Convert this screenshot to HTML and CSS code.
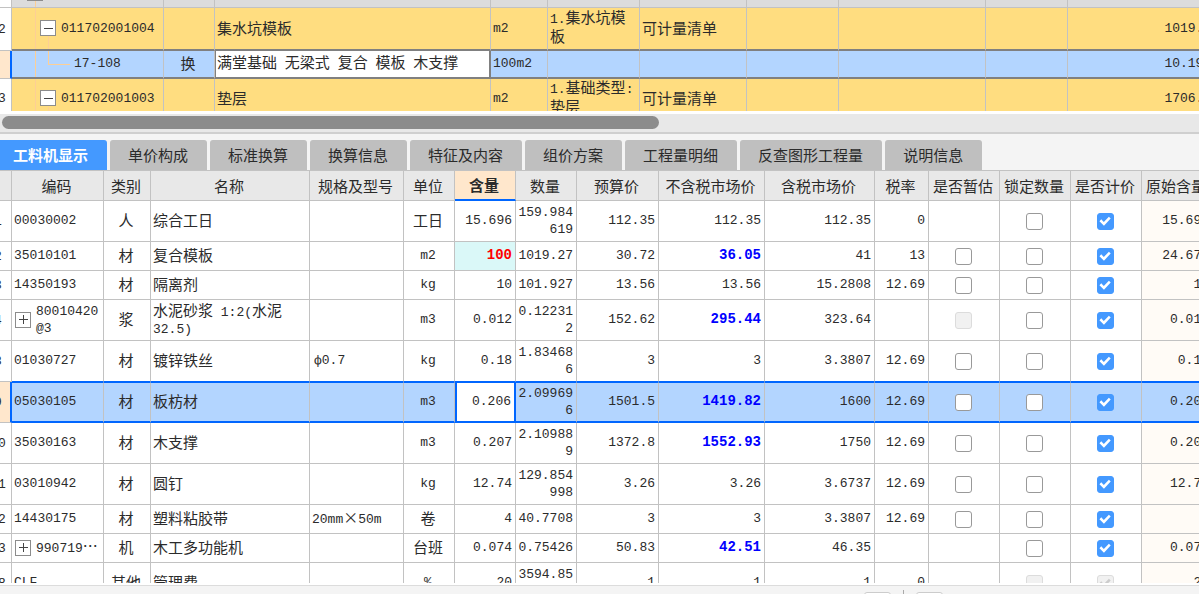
FILE: index.html
```html
<!DOCTYPE html>
<html lang="zh-CN">
<head>
<meta charset="utf-8">
<title>工料机显示</title>
<link rel="stylesheet" href="styles.css">
</head>
<body>
<main class="app">
<section class="bill-pane">
<table class="grid bill">
<colgroup><col class="w12"><col class="w152"><col class="w51"><col><col class="w57"><col class="w92"><col class="w107"><col class="w92"><col class="w147"><col class="w82"><col class="w155"></colgroup>
<tbody>
<tr class="group"><td class="head"></td><td class="tree root"></td><td></td><td></td><td></td><td></td><td></td><td></td><td></td><td></td><td></td></tr>
<tr class="item first"><td class="head"><span class="no">12</span></td><td class="tree"><div class="code"><button class="toggle" aria-label="折叠"></button>011702001004</div></td><td></td><td class="zh">集水坑模板</td><td>m2</td><td>1.<span class="zh">集水坑模板</span></td><td class="zh">可计量清单</td><td></td><td></td><td></td><td class="num">1019.27</td></tr>
<tr class="current"><td class="head"></td><td class="tree leaf">17-108</td><td class="zh mid">换</td><td class="edit"><span class="zh">满堂基础</span> <span class="zh">无梁式</span> <span class="zh">复合</span> <span class="zh">模板</span> <span class="zh">木支撑</span></td><td>100m2</td><td></td><td></td><td></td><td></td><td></td><td class="num">10.1927</td></tr>
<tr class="item last"><td class="head"><span class="no">13</span></td><td class="tree"><div class="code"><button class="toggle" aria-label="折叠"></button>011702001003</div></td><td></td><td class="zh">垫层</td><td>m2</td><td>1.<span class="zh">基础类型</span>:<span class="zh">垫层</span></td><td class="zh">可计量清单</td><td></td><td></td><td></td><td class="num">1706.49</td></tr>
</tbody>
</table>
</section>
<div class="scroll"><div class="thumb"></div></div>
<nav class="tabs" role="tablist">
<button class="tab on" role="tab" aria-selected="true">工料机显示</button>
<button class="tab" role="tab">单价构成</button>
<button class="tab" role="tab">标准换算</button>
<button class="tab" role="tab">换算信息</button>
<button class="tab" role="tab">特征及内容</button>
<button class="tab" role="tab">组价方案</button>
<button class="tab" role="tab">工程量明细</button>
<button class="tab" role="tab">反查图形工程量</button>
<button class="tab" role="tab">说明信息</button>
</nav>
<section class="detail-pane">
<table class="grid detail">
<colgroup><col class="w12"><col class="w92"><col class="w47"><col><col class="w94"><col class="w51"><col class="w61"><col class="w61"><col class="w82"><col class="w106"><col class="w110"><col class="w54"><col class="w71"><col class="w71"><col class="w71"><col class="w71"></colgroup>
<thead>
<tr><th></th><th>编码</th><th>类别</th><th>名称</th><th>规格及型号</th><th>单位</th><th class="active">含量</th><th>数量</th><th>预算价</th><th>不含税市场价</th><th>含税市场价</th><th>税率</th><th>是否暂估</th><th>锁定数量</th><th>是否计价</th><th>原始含量</th></tr>
</thead>
<tbody>
<tr class="tall"><td class="head"><span class="no">1</span></td><td>00030002</td><td class="zh mid">人</td><td class="zh">综合工日</td><td></td><td class="zh mid">工日</td><td class="num">15.696</td><td class="num">159.984619</td><td class="num">112.35</td><td class="num">112.35</td><td class="num">112.35</td><td class="num">0</td><td></td><td class="mid"><input type="checkbox" aria-label="锁定数量"></td><td class="mid"><input type="checkbox" aria-label="是否计价" checked></td><td class="num orig">15.696</td></tr>
<tr><td class="head"><span class="no">2</span></td><td>35010101</td><td class="zh mid">材</td><td class="zh">复合模板</td><td></td><td class="mid">m2</td><td class="num changed">100</td><td class="num">1019.27</td><td class="num">30.72</td><td class="num price">36.05</td><td class="num">41</td><td class="num">13</td><td class="mid"><input type="checkbox" aria-label="是否暂估"></td><td class="mid"><input type="checkbox" aria-label="锁定数量"></td><td class="mid"><input type="checkbox" aria-label="是否计价" checked></td><td class="num orig">24.675</td></tr>
<tr><td class="head"><span class="no">3</span></td><td>14350193</td><td class="zh mid">材</td><td class="zh">隔离剂</td><td></td><td class="mid">kg</td><td class="num">10</td><td class="num">101.927</td><td class="num">13.56</td><td class="num">13.56</td><td class="num">15.2808</td><td class="num">12.69</td><td class="mid"><input type="checkbox" aria-label="是否暂估"></td><td class="mid"><input type="checkbox" aria-label="锁定数量"></td><td class="mid"><input type="checkbox" aria-label="是否计价" checked></td><td class="num orig">10</td></tr>
<tr class="tall"><td class="head"><span class="no">4</span></td><td><div class="code"><button class="toggle plus" aria-label="展开"></button><span>80010420@3</span></div></td><td class="zh mid">浆</td><td class="mix"><span class="zh">水泥砂浆</span> 1:2(<span class="zh">水泥</span> <span class="keep">32.5)</span></td><td></td><td class="mid">m3</td><td class="num">0.012</td><td class="num">0.122312</td><td class="num">152.62</td><td class="num price">295.44</td><td class="num">323.64</td><td></td><td class="mid"><input type="checkbox" aria-label="是否暂估" disabled></td><td class="mid"><input type="checkbox" aria-label="锁定数量"></td><td class="mid"><input type="checkbox" aria-label="是否计价" checked></td><td class="num orig">0.012</td></tr>
<tr class="tall before"><td class="head"><span class="no">8</span></td><td>01030727</td><td class="zh mid">材</td><td class="zh">镀锌铁丝</td><td class="spec">ф0.7</td><td class="mid">kg</td><td class="num">0.18</td><td class="num">1.834686</td><td class="num">3</td><td class="num">3</td><td class="num">3.3807</td><td class="num">12.69</td><td class="mid"><input type="checkbox" aria-label="是否暂估"></td><td class="mid"><input type="checkbox" aria-label="锁定数量"></td><td class="mid"><input type="checkbox" aria-label="是否计价" checked></td><td class="num orig">0.18</td></tr>
<tr class="tall selected"><td class="head"><span class="no">9</span></td><td>05030105</td><td class="zh mid">材</td><td class="zh">板枋材</td><td></td><td class="mid">m3</td><td class="num focus">0.206</td><td class="num">2.099696</td><td class="num">1501.5</td><td class="num price">1419.82</td><td class="num">1600</td><td class="num">12.69</td><td class="mid"><input type="checkbox" aria-label="是否暂估"></td><td class="mid"><input type="checkbox" aria-label="锁定数量"></td><td class="mid"><input type="checkbox" aria-label="是否计价" checked></td><td class="num orig">0.206</td></tr>
<tr class="tall"><td class="head"><span class="no">10</span></td><td>35030163</td><td class="zh mid">材</td><td class="zh">木支撑</td><td></td><td class="mid">m3</td><td class="num">0.207</td><td class="num">2.109889</td><td class="num">1372.8</td><td class="num price">1552.93</td><td class="num">1750</td><td class="num">12.69</td><td class="mid"><input type="checkbox" aria-label="是否暂估"></td><td class="mid"><input type="checkbox" aria-label="锁定数量"></td><td class="mid"><input type="checkbox" aria-label="是否计价" checked></td><td class="num orig">0.207</td></tr>
<tr class="tall"><td class="head"><span class="no">11</span></td><td>03010942</td><td class="zh mid">材</td><td class="zh">圆钉</td><td></td><td class="mid">kg</td><td class="num">12.74</td><td class="num">129.854998</td><td class="num">3.26</td><td class="num">3.26</td><td class="num">3.6737</td><td class="num">12.69</td><td class="mid"><input type="checkbox" aria-label="是否暂估"></td><td class="mid"><input type="checkbox" aria-label="锁定数量"></td><td class="mid"><input type="checkbox" aria-label="是否计价" checked></td><td class="num orig">12.74</td></tr>
<tr><td class="head"><span class="no">12</span></td><td>14430175</td><td class="zh mid">材</td><td class="zh">塑料粘胶带</td><td>20mm<span class="zh">×</span>50m</td><td class="zh mid">卷</td><td class="num">4</td><td class="num">40.7708</td><td class="num">3</td><td class="num">3</td><td class="num">3.3807</td><td class="num">12.69</td><td class="mid"><input type="checkbox" aria-label="是否暂估"></td><td class="mid"><input type="checkbox" aria-label="锁定数量"></td><td class="mid"><input type="checkbox" aria-label="是否计价" checked></td><td class="num orig">4</td></tr>
<tr><td class="head"><span class="no">13</span></td><td><div class="code"><button class="toggle plus" aria-label="展开"></button><span>990719<span class="zh">…</span></span></div></td><td class="zh mid">机</td><td class="zh">木工多功能机</td><td></td><td class="zh mid">台班</td><td class="num">0.074</td><td class="num">0.75426</td><td class="num">50.83</td><td class="num price">42.51</td><td class="num">46.35</td><td></td><td></td><td class="mid"><input type="checkbox" aria-label="锁定数量"></td><td class="mid"><input type="checkbox" aria-label="是否计价" checked></td><td class="num orig">0.074</td></tr>
<tr class="tall"><td class="head"><span class="no">18</span></td><td>CLF</td><td class="zh mid">其他</td><td class="zh">管理费</td><td></td><td class="mid">%</td><td class="num">20</td><td class="num">3594.8541</td><td class="num">1</td><td class="num">1</td><td class="num">1</td><td class="num">0</td><td></td><td class="mid"><input type="checkbox" aria-label="锁定数量" disabled></td><td class="mid"><input type="checkbox" aria-label="是否计价" checked disabled></td><td class="num orig">20</td></tr>
</tbody>
</table>
</section>
<footer class="status"><span class="chip"></span><span class="divider"></span><span class="chip"></span></footer>
</main>
</body>
</html>
```
FILE: styles.css
```css
* { box-sizing: border-box; }

body {
  margin: 0;
  color: #2b2b2b;
  background: #f4f4f4;
  font: 13px/17px "Liberation Mono", "Noto Sans CJK SC", monospace;
}

button { font: inherit; color: inherit; }

.app {
  display: grid;
  grid-template-rows: 114px 20px 37px minmax(0, 1fr) 9px;
  height: 100vh;
  overflow: hidden;
}

.app > * { min-width: 0; overflow: hidden; }

.zh, th, .tab { font-family: "Noto Sans CJK SC", sans-serif; font-size: 15px; }
span.zh { line-height: 16px; }

/* Shared grid */
.grid {
  width: 100%;
  table-layout: fixed;
  border-collapse: separate;
  border-spacing: 0;
}

.grid td, .grid th {
  padding: 0 2px 1px;
  border-right: 1px solid #c2c2c2;
  border-bottom: 1px solid #c2c2c2;
  word-break: break-all;
}

.grid td.zh { padding-bottom: 3px; }
.grid .head { padding: 0; background: #fff; }
.no { display: block; width: 16px; margin-left: -10px; text-align: center; }
.grid .mid { padding-left: 0; text-align: center; }
.grid .num { text-align: right; padding-right: 3px; }
.code { display: flex; align-items: center; gap: 5px; }

.toggle {
  flex: none;
  width: 16px;
  height: 16px;
  padding: 0;
  border: 1px solid #8c8c8c;
  background: linear-gradient(#444, #444) center / 9px 1px no-repeat #fff;
}

.toggle.plus {
  margin-left: 1px;
  background: linear-gradient(#444, #444) center / 9px 1px no-repeat,
    linear-gradient(#444, #444) center / 1px 9px no-repeat #fff;
}

.w12 { width: 12px; }
.w47 { width: 47px; }
.w51 { width: 51px; }
.w54 { width: 54px; }
.w57 { width: 57px; }
.w61 { width: 61px; }
.w71 { width: 71px; }
.w82 { width: 82px; }
.w92 { width: 92px; }
.w94 { width: 94px; }
.w106 { width: 106px; }
.w107 { width: 107px; }
.w110 { width: 110px; }
.w147 { width: 147px; }
.w152 { width: 152px; }
.w155 { width: 155px; }

/* Bill list */
.bill-pane { border-bottom: 3px solid #fff; background: #fff; }
.bill { min-width: 1223px; }
.group { height: 8px; background: #dcdcdc; }
.item { background: #ffdd80; }
.first { height: 43px; }
.last { height: 38px; }
.current { height: 28px; background: #b3d5ff; }
.first td:not(.head), .current td:not(.head) { border-bottom: 2px solid #808080; }
.current .head { background: #ffe7cc; border-right: 2px solid #06f; }
.bill .edit { padding-left: 1px; background: #fff; border-right: 2px solid #808080; border-left: 1px solid #808080; }

.tree {
  position: relative;
  background: linear-gradient(#fdcf95, #fdcf95) 23px 0 / 1px 100% no-repeat;
}

.bill .item .tree { padding-left: 28px; }
.bill .current .leaf { padding-left: 62px; }

/* Connectors drawn over the tree cells */
.root::after {
  content: "";
  position: absolute;
  left: 15px;
  top: 0;
  width: 16px;
  height: 1px;
  background: #8c8c8c;
}

.item .tree::after {
  content: "";
  position: absolute;
  left: 36px;
  top: 28px;
  bottom: 0;
  width: 1px;
  background: #fdcf95;
}

.leaf::after {
  content: "";
  position: absolute;
  left: 36px;
  top: 0;
  width: 21px;
  height: 13px;
  border: solid #fdcf95;
  border-width: 0 0 1px 1px;
}

.scroll {
  padding: 2px;
  background: #e8e8e8;
  border-bottom: 2px solid #cfcfcf;
}

.thumb { width: 55%; height: 13px; border-radius: 7px; background: #8c8c8c; }

/* Tabs */
.tabs {
  display: flex;
  gap: 3px;
  padding-top: 6px;
  border-bottom: 1px solid #c2c2c2;
}

.tab {
  flex: none;
  margin: 0;
  padding: 0 19px 2px 18px;
  border: 0;
  border-radius: 3px 3px 0 0;
  background: #bfbfbf;
}

.tab.on { margin-left: -5px; color: #fff; font-weight: bold; background: #4499ff; }

/* Resource detail */
.detail-pane { border-bottom: 2px solid #fff; background: #fff; }
.detail { min-width: 1213px; }
.detail tr { height: 29px; }
.detail tr.tall { height: 41px; }
.detail th { padding: 0 2px 0 0; font-weight: normal; text-align: center; background: #e8e8e8; white-space: nowrap; }
.detail thead tr { height: 30px; }
.detail th.active { padding-bottom: 2px; font-weight: bold; background: #ffe7cc; border-bottom: 2px solid #06f; }
.detail .changed { color: #f00; font-size: 14px; font-weight: bold; background: #daf8f8; }
.price { color: #00f; font-size: 14px; font-weight: bold; }
.orig { background: #fffbf6; }
.detail .mix { word-break: normal; }
.keep { white-space: nowrap; }
.detail .spec { padding-left: 4px; }

.before td:not(.head) { border-bottom-color: #06f; }
.selected, .selected .orig { background: #b3d5ff; }
.selected td:not(.head) { border-top: 1px solid #06f; border-bottom: 2px solid #06f; }
.selected .head { background: #ffe7cc; border-right: 2px solid #06f; }
.selected .focus { background: #fff; border-right: 2px solid #06f; border-left: 2px solid #06f; }

input[type="checkbox"] {
  appearance: none;
  display: block;
  width: 17px;
  height: 17px;
  margin: 1px auto 0;
  border: 1px solid #999;
  border-radius: 3px;
  background: #fff;
}

input[type="checkbox"]:checked { border-color: #4499ff; background: #4499ff; }

input[type="checkbox"]:checked::after {
  content: "";
  display: block;
  width: 15px;
  height: 15px;
  background: #fff;
  clip-path: polygon(13% 51%, 25% 39%, 42% 57%, 76% 21%, 88% 33%, 43% 81%);
}

input[type="checkbox"]:disabled { border-color: #dcdcdc; background: #f1f1f1; }
input[type="checkbox"]:disabled::after { background: #ccc; }

/* Status bar */
.status {
  display: flex;
  justify-content: flex-end;
  gap: 12px;
  padding: 4px 256px 0 0;
  border-top: 1px solid #dcdcdc;
}

.chip { width: 27px; height: 12px; margin-top: 2px; border: 1px solid #ccc; border-radius: 3px; background: #fff; }
.divider { width: 1px; background: #aaa; }
```
